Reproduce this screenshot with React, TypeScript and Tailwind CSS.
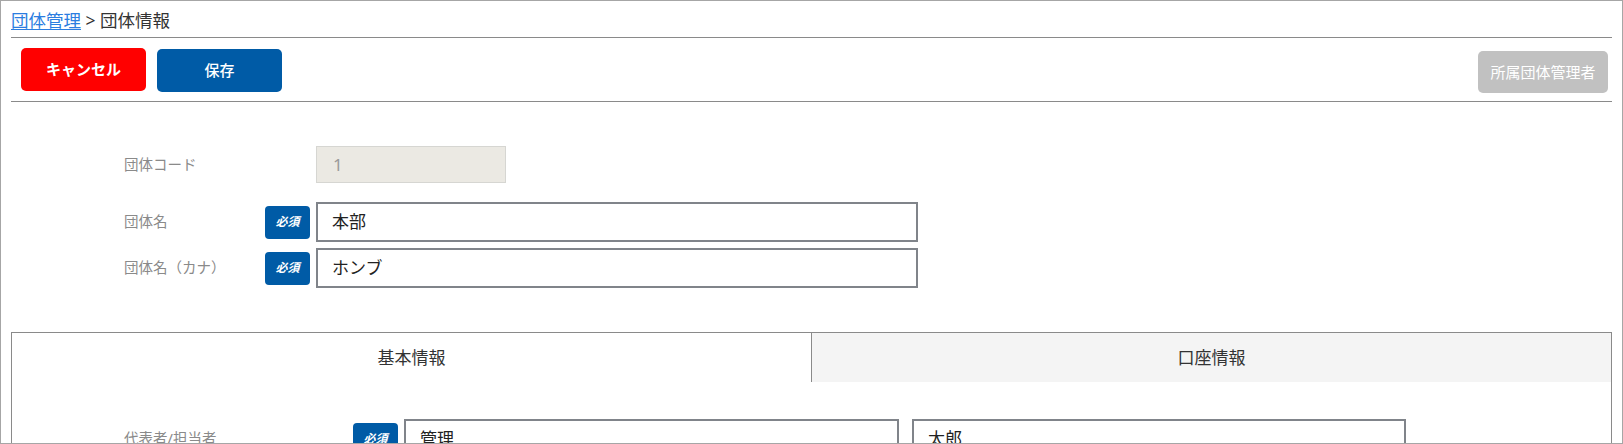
import React from 'react';

const jp = { fontFamily: '"Noto Sans", "Noto Sans CJK JP", sans-serif' };

const Badge: React.FC = () => (
    <span className="w-[45px] h-[33px] mr-[6px] rounded-[4px] bg-[#005ba6] text-white text-[12px] font-bold flex items-center justify-center italic">
        必須
    </span>
);

const TextBox: React.FC<{ value: string; width: string }> = ({ value, width }) => (
    <div className={`${width} h-[40px] border-2 border-[#80848a] bg-white pl-[14px] flex items-center text-[17px] text-[#222]`}>
        {value}
    </div>
);

export default function App() {
    return (
        <div style={jp} className="w-full h-[444px] border border-[#a6a6a6] overflow-hidden px-[10px] bg-white">
            {/* Breadcrumb */}
            <div className="pt-[6px] pb-[4px] border-b border-[#8a8a8a] text-[17.5px] leading-[26px] text-[#333]">
                <a className="text-[#2b7de0] underline underline-offset-2 decoration-1">団体管理</a>
                <span> &gt; 団体情報</span>
            </div>

            {/* Toolbar */}
            <div className="flex items-start py-[10px] border-b border-[#8a8a8a] h-[64px]">
                <button className="ml-[10px] w-[125px] h-[43px] rounded-[5px] bg-[#ff0000] text-white text-[15px] font-bold">
                    キャンセル
                </button>
                <button className="ml-[11px] mt-[1px] w-[125px] h-[43px] rounded-[5px] bg-[#005ba6] text-white text-[15px] font-medium">
                    保存
                </button>
                <button className="ml-auto mr-[4px] mt-[3px] w-[130px] h-[42px] rounded-[5px] bg-[#c1c1c1] text-white text-[15px]">
                    所属団体管理者
                </button>
            </div>

            {/* Header form */}
            <div className="pl-[113px] pt-[44px] text-[14.5px] text-[#8a8a8a]">
                <div className="flex items-center h-[37px]">
                    <span className="w-[192px]">団体コード</span>
                    <div className="w-[190px] h-[37px] bg-[#ebe9e3] border border-[#d6d6d2] pl-[16px] flex items-center text-[17px] text-[#9a9a9a]">
                        1
                    </div>
                </div>
                <div className="flex items-center mt-[19px]">
                    <span className="w-[141px]">団体名</span>
                    <Badge />
                    <TextBox value="本部" width="w-[602px]" />
                </div>
                <div className="flex items-center mt-[6px]">
                    <span className="w-[141px]">団体名（カナ）</span>
                    <Badge />
                    <TextBox value="ホンブ" width="w-[602px]" />
                </div>
            </div>

            {/* Tabs panel */}
            <div className="mt-[44px] border border-[#8a8a8a]">
                <div className="flex h-[49px] text-[17px] text-[#333]">
                    <div className="w-[799px] flex items-center justify-center bg-white">基本情報</div>
                    <div className="flex-1 flex items-center justify-center bg-[#f4f4f4] border-l border-[#8a8a8a]">口座情報</div>
                </div>
                <div className="pl-[112px] pt-[37px] pb-[20px] text-[14.5px] text-[#8a8a8a]">
                    <div className="flex items-center">
                        <span className="w-[229px]">代表者/担当者</span>
                        <Badge />
                        <TextBox value="管理" width="w-[495px]" />
                        <div className="ml-[13px]">
                            <TextBox value="太郎" width="w-[494px]" />
                        </div>
                    </div>
                </div>
            </div>
        </div>
    );
}
